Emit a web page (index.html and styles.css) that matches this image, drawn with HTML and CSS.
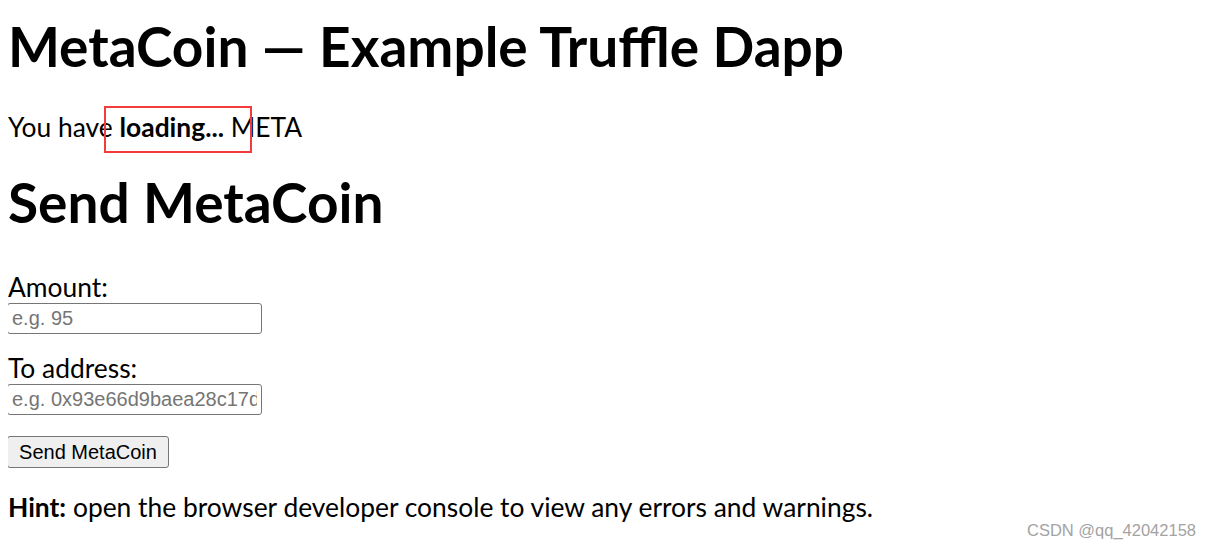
FILE: index.html
```html
<!DOCTYPE html>
<html lang="en">
<head>
<meta charset="utf-8">
<title>MetaCoin - Truffle Webpack Example w/ Frontend</title>
<link rel="stylesheet" href="styles.css">
</head>
<body>
<h1 class="title">MetaCoin — Example Truffle Dapp</h1>
<p class="balance-line">You have <strong class="balance">loading...</strong> META<span class="mark"></span></p>
<h1 class="send-title">Send MetaCoin</h1>
<label class="field-label first" for="amount">Amount:</label>
<input class="field" type="text" id="amount" placeholder="e.g. 95">
<label class="field-label" for="receiver">To address:</label>
<input class="field" type="text" id="receiver" placeholder="e.g. 0x93e66d9baea28c17d9fc393b53e3fbdd76899dae">
<button class="send-btn" type="button">Send MetaCoin</button>
<p class="hint"><strong>Hint:</strong> open the browser developer console to view any errors and warnings.</p>
<div class="watermark">CSDN @qq_42042158</div>
</body>
</html>
```
FILE: styles.css
```css
body {
  margin: 8px;
  font-family: "Lato", "Open Sans", sans-serif;
  font-size: 26.4px;
  color: #000;
  background: #fff;
}

.title,
.send-title {
  font-size: 55px;
  line-height: 66px;
  font-weight: bold;
  margin: 5px 0 0;
}

.send-title {
  margin-top: 26px;
}

.balance-line {
  position: relative;
  margin: 32px 0 0;
  line-height: 32px;
}

.balance {
  font-weight: bold;
}

.mark {
  position: absolute;
  left: 96px;
  top: -5px;
  width: 148px;
  height: 47px;
  box-sizing: border-box;
  border: 2px solid #f23c3c;
}

.field-label {
  display: block;
  line-height: 32px;
  margin-top: 18px;
}

.field-label.first {
  margin-top: 36px;
}

.field {
  display: block;
  box-sizing: border-box;
  width: 255px;
  height: 31px;
  margin: 0 0 0 -1px;
  padding: 0 4px;
  border: 1px solid #767676;
  border-radius: 3px;
  font-family: "Liberation Sans", Arial, sans-serif;
  font-size: 20px;
  color: #000;
  background: #fff;
}

.field::placeholder {
  color: #757575;
}

.send-btn {
  display: block;
  box-sizing: border-box;
  width: 162px;
  height: 32px;
  margin: 21px 0 0 -1px;
  padding: 0;
  border: 1px solid #767676;
  border-radius: 3px;
  background: #efefef;
  font-family: "Liberation Sans", Arial, sans-serif;
  font-size: 20px;
  color: #000;
}

.hint {
  margin: 23px 0 0;
  line-height: 32px;
}

.watermark {
  position: absolute;
  top: 522px;
  right: 15px;
  font-family: "Liberation Sans", Arial, sans-serif;
  font-size: 16.5px;
  line-height: 16.5px;
  color: #a3a3a3;
  white-space: nowrap;
}
```
